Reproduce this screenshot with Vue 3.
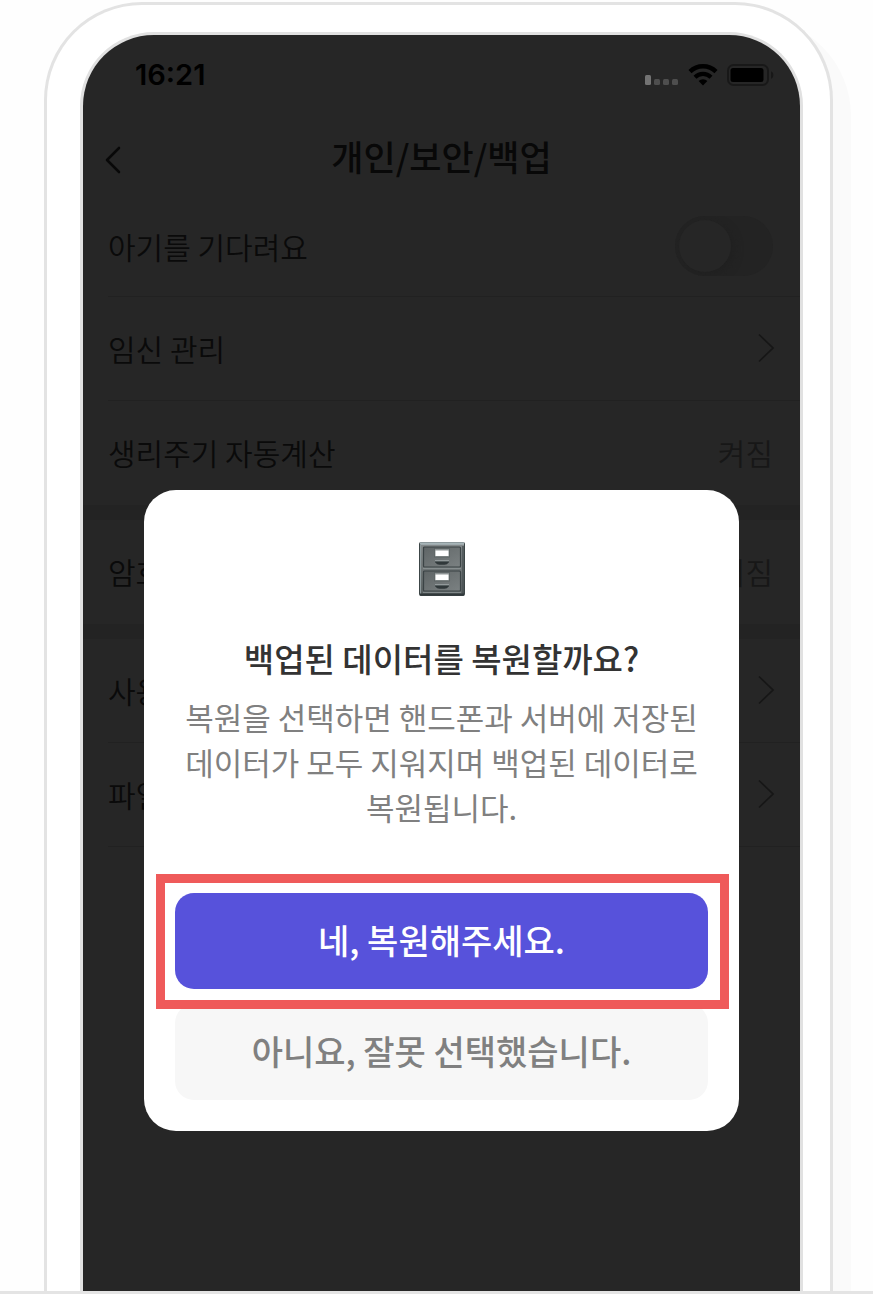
<script setup>
const groups = [
  [
    { id: 'baby', label: '아기를 기다려요', kind: 'switch' },
    { id: 'pregnancy', label: '임신 관리', kind: 'link' },
    { id: 'cycle', label: '생리주기 자동계산', kind: 'value', value: '켜짐' },
  ],
  [{ id: 'passcode', label: '암호', kind: 'value', value: '꺼짐' }],
  [
    { id: 'user', label: '사용', kind: 'link' },
    { id: 'file', label: '파일', kind: 'link' },
  ],
]
</script>

<template>
  <div class="stage">
    <div class="phone">
      <div class="screen">
        <div class="status">
          <span class="time">16:21</span>
          <svg class="signal" width="34" height="22" viewBox="0 0 34 22" aria-hidden="true">
            <rect x="0" y="11" width="6" height="10" rx="1.5" fill="#737373" />
            <rect x="9" y="15" width="6" height="6" rx="1.5" fill="#4e4e4e" />
            <rect x="18" y="15" width="6" height="6" rx="1.5" fill="#4e4e4e" />
            <rect x="27" y="15" width="6" height="6" rx="1.5" fill="#4e4e4e" />
          </svg>
          <svg class="wifi" width="30" height="22" viewBox="0 0 30 22" aria-hidden="true">
            <path d="M2 7.6A18.6 18.6 0 0 1 28 7.6" fill="none" stroke="#000" stroke-width="4.4" />
            <path d="M7 13.2A11.5 11.5 0 0 1 23 13.2" fill="none" stroke="#000" stroke-width="4.2" />
            <path d="M10.6 17A6.2 6.2 0 0 1 19.4 17L15 21.4Z" fill="#000" />
          </svg>
          <svg class="battery" width="47" height="22" viewBox="0 0 47 22" aria-hidden="true">
            <rect x="1" y="1" width="40" height="20" rx="5.5" fill="none" stroke="#181818" stroke-width="2" />
            <rect x="3.5" y="4" width="33" height="14" rx="2.5" fill="#000" />
            <path d="M44 7.2C47.2 8.6 47.2 13.4 44 14.8Z" fill="#181818" />
          </svg>
        </div>

        <header class="bar">
          <button class="back" type="button" aria-label="뒤로">
            <svg width="16" height="28" viewBox="0 0 16 28" aria-hidden="true">
              <path d="M14 2L2 14L14 26" fill="none" stroke="#080808" stroke-width="2.6" stroke-linecap="round" stroke-linejoin="round" />
            </svg>
          </button>
          <h1>개인/보안/백업</h1>
        </header>

        <section v-for="(rows, g) in groups" :key="g" class="group">
          <div v-for="row in rows" :key="row.id" class="row" :class="row.kind">
            <template v-if="row.kind === 'switch'">
              <label :for="row.id">{{ row.label }}</label>
              <input :id="row.id" class="toggle" type="checkbox" role="switch" />
            </template>
            <a v-else-if="row.kind === 'link'" href="#" class="anchor">
              <span>{{ row.label }}</span>
              <svg width="18" height="30" viewBox="0 0 18 30" aria-hidden="true">
                <path d="M2 1.5L16 15L2 28.5" fill="none" stroke="#161616" stroke-width="1.7" />
              </svg>
            </a>
            <template v-else>
              <span>{{ row.label }}</span>
              <span class="setting">{{ row.value }}</span>
            </template>
          </div>
        </section>

        <div class="overlay">
          <div class="dialog" role="dialog" aria-modal="true" aria-labelledby="dialog-title">
            <svg class="cabinet" width="46" height="54" viewBox="0 0 46 54" aria-hidden="true">
              <defs>
                <linearGradient id="face" x1="0" y1="0" x2="0" y2="1">
                  <stop offset="0" stop-color="#858b8c" />
                  <stop offset="1" stop-color="#596061" />
                </linearGradient>
                <linearGradient id="drawer" x1="0" y1="0" x2="1" y2="1">
                  <stop offset="0" stop-color="#5f6566" />
                  <stop offset="1" stop-color="#7b8182" />
                </linearGradient>
              </defs>
              <rect width="46" height="54" rx="2" fill="#3c4546" />
              <rect x="1" y="1" width="44" height="51" rx="1" fill="url(#face)" />
              <path d="M1 1.5H45" stroke="#a7b5b8" stroke-width="2.4" />
              <path d="M1.5 2V52" stroke="#8d999b" />
              <path d="M44 4V52" stroke="#454e50" stroke-width="1.4" />
              <g v-for="y in [4, 28]" :key="y" :transform="`translate(0 ${y})`">
                <rect x="4.5" y="1" width="37" height="20" rx="1" fill="url(#drawer)" stroke="#3b4345" stroke-width="1.2" />
                <path d="M4 22.4H42" stroke="#929899" stroke-width=".8" />
                <rect x="15.500" y="2.500" width="15" height="8.500" fill="#8e9495" stroke="#5a6162" stroke-width=".8" />
                <rect x="16.500" y="4.500" width="13" height="5.500" fill="#fff" />
                <path d="M16 14.500H30V16.200Q28 18.800 25.500 18.800H20.500Q18 18.800 16 16.200Z" fill="#30383a" />
                <path d="M16 14.800H30" stroke="#b0b7b8" />
              </g>
              <path d="M1 52.500H45" stroke="#30383a" stroke-width="2" />
            </svg>
            <h2 id="dialog-title">백업된 데이터를 복원할까요?</h2>
            <p>복원을 선택하면 핸드폰과 서버에 저장된 데이터가 모두 지워지며 백업된 데이터로 복원됩니다.</p>
            <div class="actions">
              <div class="marked">
                <button class="btn primary" type="button">네, 복원해주세요.</button>
              </div>
              <button class="btn" type="button">아니요, 잘못 선택했습니다.</button>
            </div>
          </div>
        </div>
      </div>
    </div>
  </div>
</template>

<style>
body {
  margin: 0;
  background: #fff;
}
</style>

<style scoped>
.stage {
  box-sizing: border-box;
  display: flex;
  flex-direction: column;
  min-height: 100vh;
  padding: 2px 40px 0 44px;
  border-bottom: 3px solid #e4e4e4;
  overflow: hidden;
  background: #fefefe;
  font-family: "Noto Sans CJK KR", sans-serif;
}
.phone {
  flex: 1;
  display: flex;
  flex-direction: column;
  padding: 27px 27px 0 33px;
  border: 3px solid #e3e3e3;
  border-bottom: 0;
  border-radius: 98px 98px 0 0;
  background: #fff;
  box-shadow: 18px 16px 0 #fafafa;
}
.screen {
  position: relative;
  flex: 1;
  border: 3px solid #e1e1e1;
  border-bottom: 0;
  border-radius: 74px 74px 0 0;
  background: #262626;
  color: #0a0a0a;
}
.status {
  display: flex;
  align-items: center;
  height: 80px;
  padding: 0 26px 0 52px;
}
.time {
  flex: 1;
  font: 600 29px/32px Inter, sans-serif;
  color: #000;
}
.wifi {
  margin: 0 9px;
}
.bar {
  display: grid;
  grid-template-columns: 40px 1fr 40px;
  align-items: center;
  height: 82px;
  padding: 0 22px;
}
.back {
  display: flex;
  padding: 8px 0 0;
  border: 0;
  background: none;
}
h1 {
  margin: 0;
  text-align: center;
  font-size: 35px;
  line-height: 48px;
  font-weight: 500;
  color: #080808;
}
.group + .group {
  border-top: 15px solid #232323;
}
.row,
.anchor {
  display: flex;
  align-items: center;
  justify-content: space-between;
}
.row {
  box-sizing: border-box;
  height: 104px;
  margin-left: 25px;
  padding: 0 27px 2px 0;
  border-bottom: 1px solid #212121;
  font-size: 30px;
  line-height: 44px;
  font-weight: 350;
}
.row.switch {
  height: 100px;
}
.group:not(:last-of-type) .row:last-child {
  border-color: transparent;
}
.anchor {
  flex: 1;
  margin-right: -2px;
  color: inherit;
  text-decoration: none;
}
.setting {
  color: #171717;
}
.toggle {
  appearance: none;
  display: flex;
  width: 98px;
  height: 60px;
  margin: 0;
  padding: 4px;
  box-sizing: border-box;
  border-radius: 30px;
  background: #232323;
  overflow: hidden;
}
.toggle::before {
  content: "";
  width: 52px;
  height: 52px;
  border-radius: 50%;
  background: #262626;
  box-shadow: 3px 3px 8px #202020;
}
.overlay {
  position: absolute;
  inset: 0;
  padding: 455px 61px 0;
}
.dialog {
  display: flex;
  flex-direction: column;
  align-items: center;
  padding: 52px 31px 31px;
  border-radius: 32px;
  background: #fff;
  text-align: center;
}
h2 {
  margin: 38px 0 0;
  font-size: 33px;
  line-height: 48px;
  font-weight: 500;
  color: #333;
}
p {
  margin: 12px 0 0;
  font-size: 31px;
  line-height: 45px;
  font-weight: 400;
  color: #808080;
  word-break: keep-all;
}
.actions {
  display: flex;
  flex-direction: column;
  align-self: stretch;
  gap: 15px;
  margin-top: 64px;
}
.marked {
  position: relative;
  display: flex;
}
.marked::after {
  content: "";
  position: absolute;
  inset: -19px -21px -20px -19px;
  border: 9px solid #ef5a5a;
  pointer-events: none;
}
.btn {
  flex: 1 0 auto;
  height: 96px;
  padding: 0 0 2px;
  border: 0;
  border-radius: 19px;
  background: #f7f7f7;
  color: #808080;
  font: 500 34px/48px "Noto Sans CJK KR", sans-serif;
}
.primary {
  background: #5752db;
  color: #fff;
}
</style>
